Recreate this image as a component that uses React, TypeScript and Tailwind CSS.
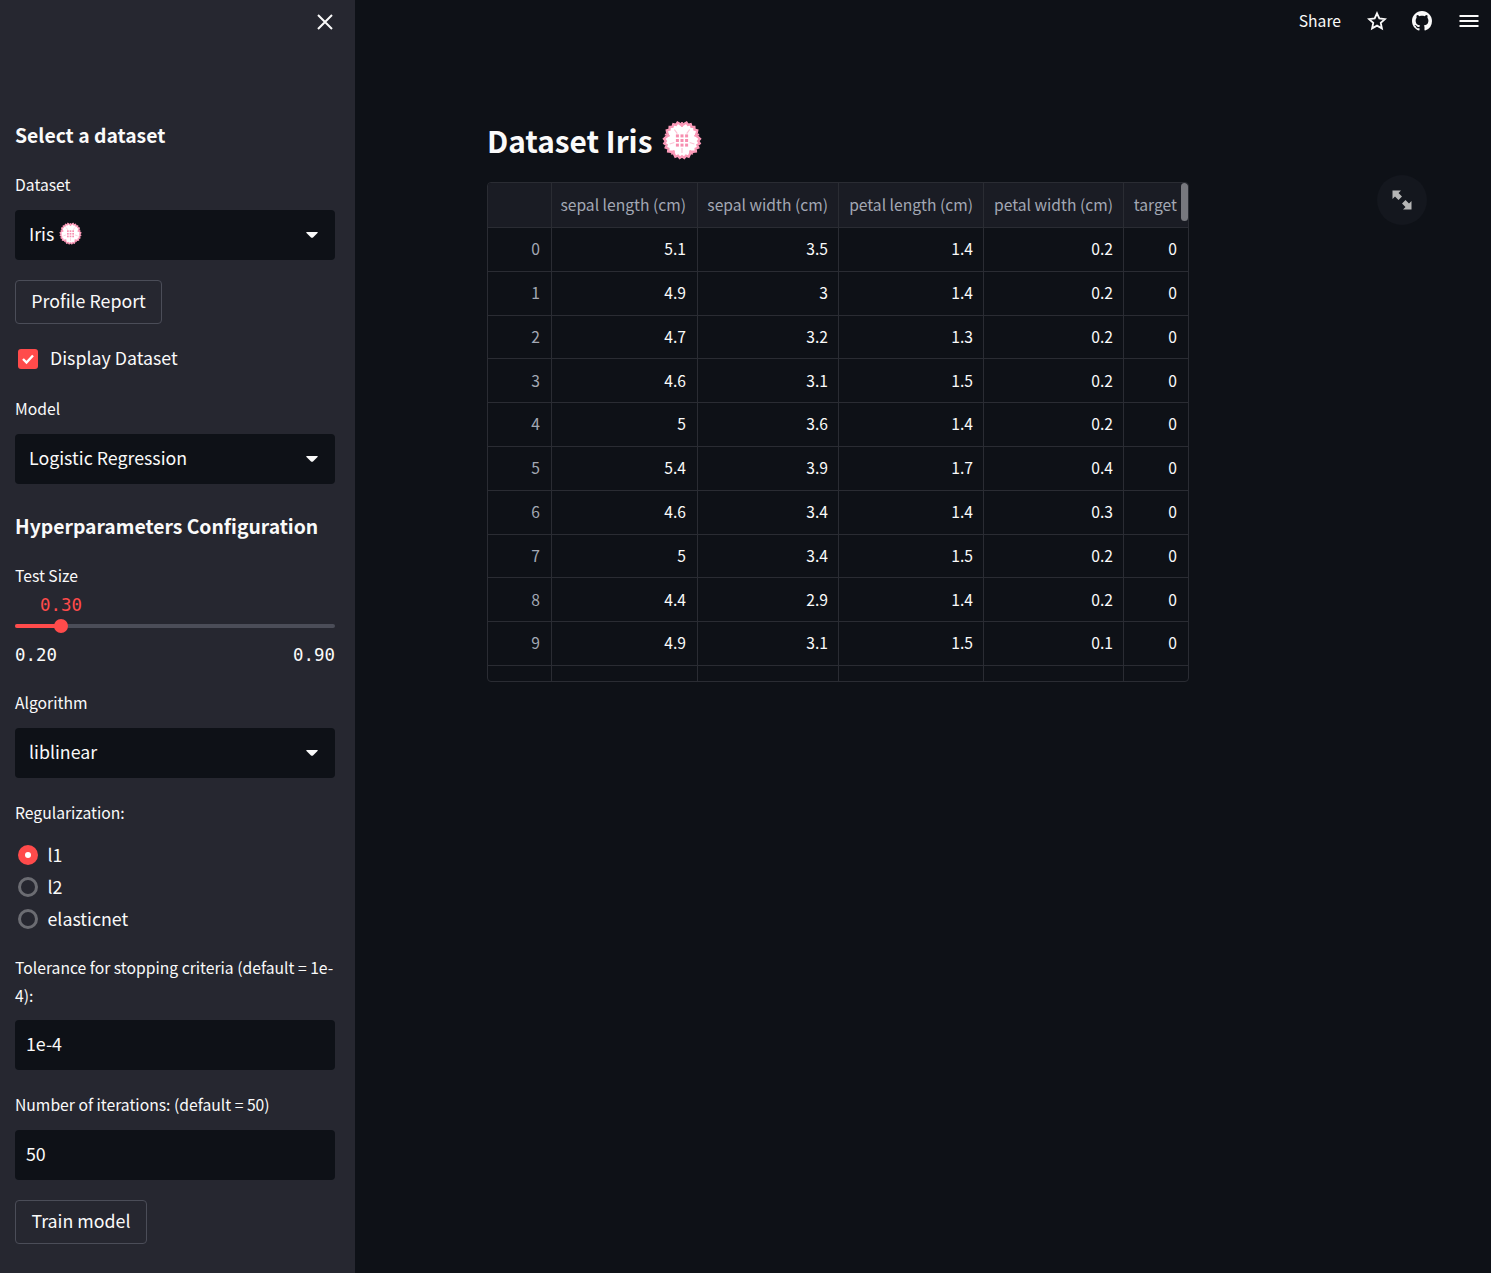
import React from "react";

const sans = "[font-family:'Noto_Sans_CJK_JP','Noto_Sans',sans-serif]";

function Flower({ size }: { size: number }) {
  const pts: string[] = [];
  const n = 50;
  for (let i = 0; i < n; i++) {
    const deg = (i / n) * 360;
    const toTip = Math.abs(((deg + 36) % 72) - 36);
    const notch = toTip < 5 ? 3.4 : 0;
    const r = (i % 2 === 0 ? 18 : 16.2) - notch;
    const a = ((deg - 90) * Math.PI) / 180;
    pts.push(`${(20 + r * Math.cos(a)).toFixed(2)},${(20 + r * Math.sin(a)).toFixed(2)}`);
  }
  const dots = [];
  for (let x = 0; x < 3; x++) for (let y = 0; y < 3; y++) dots.push([13.9 + x * 4.6, 14.4 + y * 4.6]);
  return (
    <svg width={size} height={size} viewBox="0 0 40 40" className="shrink-0">
      <polygon points={pts.join(" ")} fill="#fff" stroke="#fb9ab8" strokeWidth="2.4" strokeLinejoin="miter" />
      {[36, 108, 180, 252, 324].map((d) => (
        <path key={d} d="M20 7 L20 2" stroke="#fb9ab8" strokeWidth="1.8" transform={`rotate(${d + 36} 20 20)`} />
      ))}
      {[36, 108, 180, 252, 324].map((d) => (
        <path key={d} d="M20 12 L20 7" stroke="#fcc4d6" strokeWidth="1.2" transform={`rotate(${d} 20 20)`} />
      ))}
      {dots.map(([x, y], i) => (
        <rect key={i} x={x} y={y} width="3" height="3" fill="#f78fb0" />
      ))}
    </svg>
  );
}

function Caret() {
  return (
    <svg width="12" height="6" viewBox="0 0 12 6" className="mt-[3px] shrink-0">
      <path d="M0.5 0 H11.5 Q12 0.3 11.5 1 L7 5.5 Q6 6 5 5.5 L0.5 1 Q0 0.3 0.5 0 Z" fill="#fafafa" />
    </svg>
  );
}

function Label({ children, cls }: { children: React.ReactNode; cls: string }) {
  return <div className={`h-[28px] text-[15.7px] leading-[28px] text-[#fafafa] ${cls}`}>{children}</div>;
}

function SelectBox({ children, cls }: { children: React.ReactNode; cls: string }) {
  return (
    <div className={`flex h-[50px] items-center justify-between rounded-[4px] bg-[#0e1117] pb-[3px] pl-[14px] pr-[17px] text-[17.8px] text-[#fafafa] ${cls}`}>
      <div className="flex items-center gap-[5px]">{children}</div>
      <Caret />
    </div>
  );
}

function Btn({ children, w, cls }: { children: React.ReactNode; w: string; cls: string }) {
  return (
    <div className={`flex h-[44px] items-center justify-center rounded-[4px] border border-[#4b4d58] pb-[3px] text-[17.8px] text-[#fafafa] ${w} ${cls}`}>
      {children}
    </div>
  );
}

function Radio({ on, label }: { on?: boolean; label: string }) {
  return (
    <div className="flex h-[32px] items-center pl-[3px] text-[17.8px] text-[#fafafa]">
      {on ? (
        <div className="flex h-[20px] w-[20px] items-center justify-center rounded-full bg-[#ff4b4b]">
          <div className="h-[6px] w-[6px] rounded-full bg-white" />
        </div>
      ) : (
        <div className="h-[20px] w-[20px] rounded-full border-[3px] border-[#6b6c72]" />
      )}
      <span className="mb-[2px] ml-[9.5px]">{label}</span>
    </div>
  );
}

const columns = ["sepal length (cm)", "sepal width (cm)", "petal length (cm)", "petal width (cm)", "target"];
const rows = [
  ["5.1", "3.5", "1.4", "0.2", "0"],
  ["4.9", "3", "1.4", "0.2", "0"],
  ["4.7", "3.2", "1.3", "0.2", "0"],
  ["4.6", "3.1", "1.5", "0.2", "0"],
  ["5", "3.6", "1.4", "0.2", "0"],
  ["5.4", "3.9", "1.7", "0.4", "0"],
  ["4.6", "3.4", "1.4", "0.3", "0"],
  ["5", "3.4", "1.5", "0.2", "0"],
  ["4.4", "2.9", "1.4", "0.2", "0"],
  ["4.9", "3.1", "1.5", "0.1", "0"],
  ["", "", "", "", ""],
];
const gridCols = "grid grid-cols-[64px_146px_141px_145px_140px_65px]";
const cellPad = ["border-r border-[#2a2c33] pr-[11px]", "border-r border-[#2a2c33] pr-[10px]", "border-r border-[#2a2c33] pr-[10px]", "border-r border-[#2a2c33] pr-[10px]", "pr-[12px]"];

function DataTable() {
  return (
    <div className="relative mt-[20px] h-[500px] w-[702px] overflow-hidden rounded-[4px] border border-[#2a2c33] text-[15.65px]">
      <div className={`${gridCols} h-[45px] border-b border-[#2a2c33] bg-[#1a1c24] text-[#a3a8b4]`}>
        <div className="border-r border-[#2a2c33]" />
        {columns.map((c, i) => (
          <div key={c} className={`flex items-center justify-end pb-[1px] ${cellPad[i]}`}>
            {c}
          </div>
        ))}
      </div>
      {rows.map((r, i) => (
        <div key={i} className={`${gridCols} h-[43.8px] border-b border-[#2a2c33] text-[#fafafa]`}>
          <div className="flex items-center justify-end border-r border-[#2a2c33] pb-[1px] pr-[11px] text-[#a3a8b4]">{i < 10 ? i : ""}</div>
          {r.map((v, j) => (
            <div key={j} className={`flex items-center justify-end pb-[1px] ${cellPad[j]}`}>
              {v}
            </div>
          ))}
        </div>
      ))}
      <div className="absolute right-0 top-0 h-[38px] w-[7px] rounded-[4px] bg-[#77787e]" />
    </div>
  );
}

export default function App() {
  return (
    <div className={`flex h-[1273px] w-[1491px] overflow-hidden bg-[#0e1117] ${sans}`}>
      <aside className="flex h-full w-[355px] shrink-0 flex-col bg-[#262730] pl-[15px] pr-[20px]">
        <div className="flex h-[45px] items-end justify-end pr-[2px]">
          <svg width="16" height="16" viewBox="0 0 16 16" className="mb-[15px]">
            <path d="M1 1 L15 15 M15 1 L1 15" stroke="#fafafa" strokeWidth="2" />
          </svg>
        </div>
        <div className="mt-[72px] h-[36px] whitespace-nowrap text-[19.35px] font-semibold leading-[36px] text-[#fafafa]">Select a dataset</div>
        <Label cls="mt-[18px]">Dataset</Label>
        <SelectBox cls="mt-[11px]">
          Iris <Flower size={23} />
        </SelectBox>
        <Btn w="w-[147px]" cls="mt-[20px]">Profile Report</Btn>
        <div className="mt-[20px] flex h-[30px] items-center pl-[3px] text-[17.8px] text-[#fafafa]">
          <div className="flex h-[20px] w-[20px] items-center justify-center rounded-[3px] bg-[#ff4b4b]">
            <svg width="14" height="12" viewBox="0 0 14 12">
              <path d="M2 6 L5.5 9.5 L12 2.5" stroke="#fff" strokeWidth="2.4" fill="none" />
            </svg>
          </div>
          <span className="mb-[3px] ml-[12px]">Display Dataset</span>
        </div>
        <Label cls="mt-[21px]">Model</Label>
        <SelectBox cls="mt-[11px]">Logistic Regression</SelectBox>
        <div className="mt-[24px] h-[36px] whitespace-nowrap text-[19.35px] font-semibold leading-[36px] text-[#fafafa]">Hyperparameters Configuration</div>
        <Label cls="mt-[18px]">Test Size</Label>
        <div className="mt-[3px] h-[24px] pl-[25px] text-[17.4px] leading-[24px] text-[#ff4b4b] [font-family:'DejaVu_Sans_Mono',monospace]">0.30</div>
        <div className="relative mt-[7px] h-[4px] rounded-full bg-[#4b4d58]">
          <div className="h-full w-[46px] rounded-full bg-[#ff4b4b]" />
          <div className="absolute left-[39px] top-[-5px] h-[14px] w-[14px] rounded-full bg-[#ff4b4b]" />
        </div>
        <div className="mt-[15px] flex h-[24px] justify-between text-[17.4px] leading-[24px] text-[#fafafa] [font-family:'DejaVu_Sans_Mono',monospace]">
          <span>0.20</span>
          <span>0.90</span>
        </div>
        <Label cls="mt-[22px]">Algorithm</Label>
        <SelectBox cls="mt-[11px]">liblinear</SelectBox>
        <Label cls="mt-[21px]">Regularization:</Label>
        <div className="mt-[12px] flex flex-col">
          <Radio on label="l1" />
          <Radio label="l2" />
          <Radio label="elasticnet" />
        </div>
        <div className="mt-[19px] text-[15.7px] leading-[28px] text-[#fafafa]">Tolerance for stopping criteria (default = 1e-4):</div>
        <div className="mt-[10px] flex h-[50px] items-center rounded-[4px] bg-[#0e1117] pb-[3px] pl-[11px] text-[17.8px] text-[#fafafa]">1e-4</div>
        <Label cls="mt-[21px]">Number of iterations: (default = 50)</Label>
        <div className="mt-[11px] flex h-[50px] items-center rounded-[4px] bg-[#0e1117] pb-[3px] pl-[11px] text-[17.8px] text-[#fafafa]">50</div>
        <Btn w="w-[132px]" cls="mt-[20px]">Train model</Btn>
      </aside>
      <main className="relative flex-1">
        <header className="flex h-[42px] items-center justify-end pr-[12px] text-[#fafafa]">
          <span className="text-[15.7px]">Share</span>
          <svg width="20" height="20" viewBox="0 0 24 24" className="ml-[26px]" fill="none" stroke="#fafafa" strokeWidth="2.2" strokeLinejoin="miter">
            <path d="M12 2.8 L14.8 9 L21.5 9.7 L16.5 14.2 L17.9 20.9 L12 17.5 L6.1 20.9 L7.5 14.2 L2.5 9.7 L9.2 9 Z" />
          </svg>
          <svg width="20" height="20" viewBox="0 0 16 16" className="ml-[25px]" fill="#fafafa">
            <path d="M8 0C3.58 0 0 3.58 0 8c0 3.54 2.29 6.53 5.47 7.59.4.07.55-.17.55-.38 0-.19-.01-.82-.01-1.49-2.01.37-2.53-.49-2.69-.94-.09-.23-.48-.94-.82-1.13-.28-.15-.68-.52-.01-.53.63-.01 1.08.58 1.23.82.72 1.21 1.87.87 2.33.66.07-.52.28-.87.51-1.07-1.78-.2-3.64-.89-3.64-3.95 0-.87.31-1.59.82-2.15-.08-.2-.36-1.02.08-2.12 0 0 .67-.21 2.2.82.64-.18 1.32-.27 2-.27s1.36.09 2 .27c1.53-1.04 2.2-.82 2.2-.82.44 1.1.16 1.92.08 2.12.51.56.82 1.27.82 2.15 0 3.07-1.87 3.75-3.65 3.95.29.25.54.73.54 1.48 0 1.07-.01 1.93-.01 2.2 0 .21.15.46.55.38A8.01 8.01 0 0 0 16 8c0-4.42-3.58-8-8-8z" />
          </svg>
          <svg width="20" height="16" viewBox="0 0 20 16" className="ml-[27px]" stroke="#fafafa" strokeWidth="2">
            <path d="M0.5 3 H19.5 M0.5 8 H19.5 M0.5 13 H19.5" />
          </svg>
        </header>
        <section className="pl-[132px]">
          <h1 className="mt-[76px] flex h-[44px] items-center gap-[10px] whitespace-nowrap text-[29.8px] font-semibold leading-[44px] text-[#fafafa]">
            Dataset Iris <Flower size={40} />
          </h1>
          <DataTable />
        </section>
        <div className="absolute left-[1022px] top-[175px] flex h-[50px] w-[50px] items-center justify-center rounded-full bg-[#14171e]">
          <svg width="20" height="20" viewBox="0 0 20 20" fill="#b5b5b5">
            <path d="M0.5 0.5 H9 L6.5 3 L10 6.5 L6.5 10 L3 6.5 L0.5 9 Z" />
            <path d="M19.5 19.5 H11 L13.5 17 L10 13.5 L13.5 10 L17 13.5 L19.5 11 Z" />
          </svg>
        </div>
      </main>
    </div>
  );
}
